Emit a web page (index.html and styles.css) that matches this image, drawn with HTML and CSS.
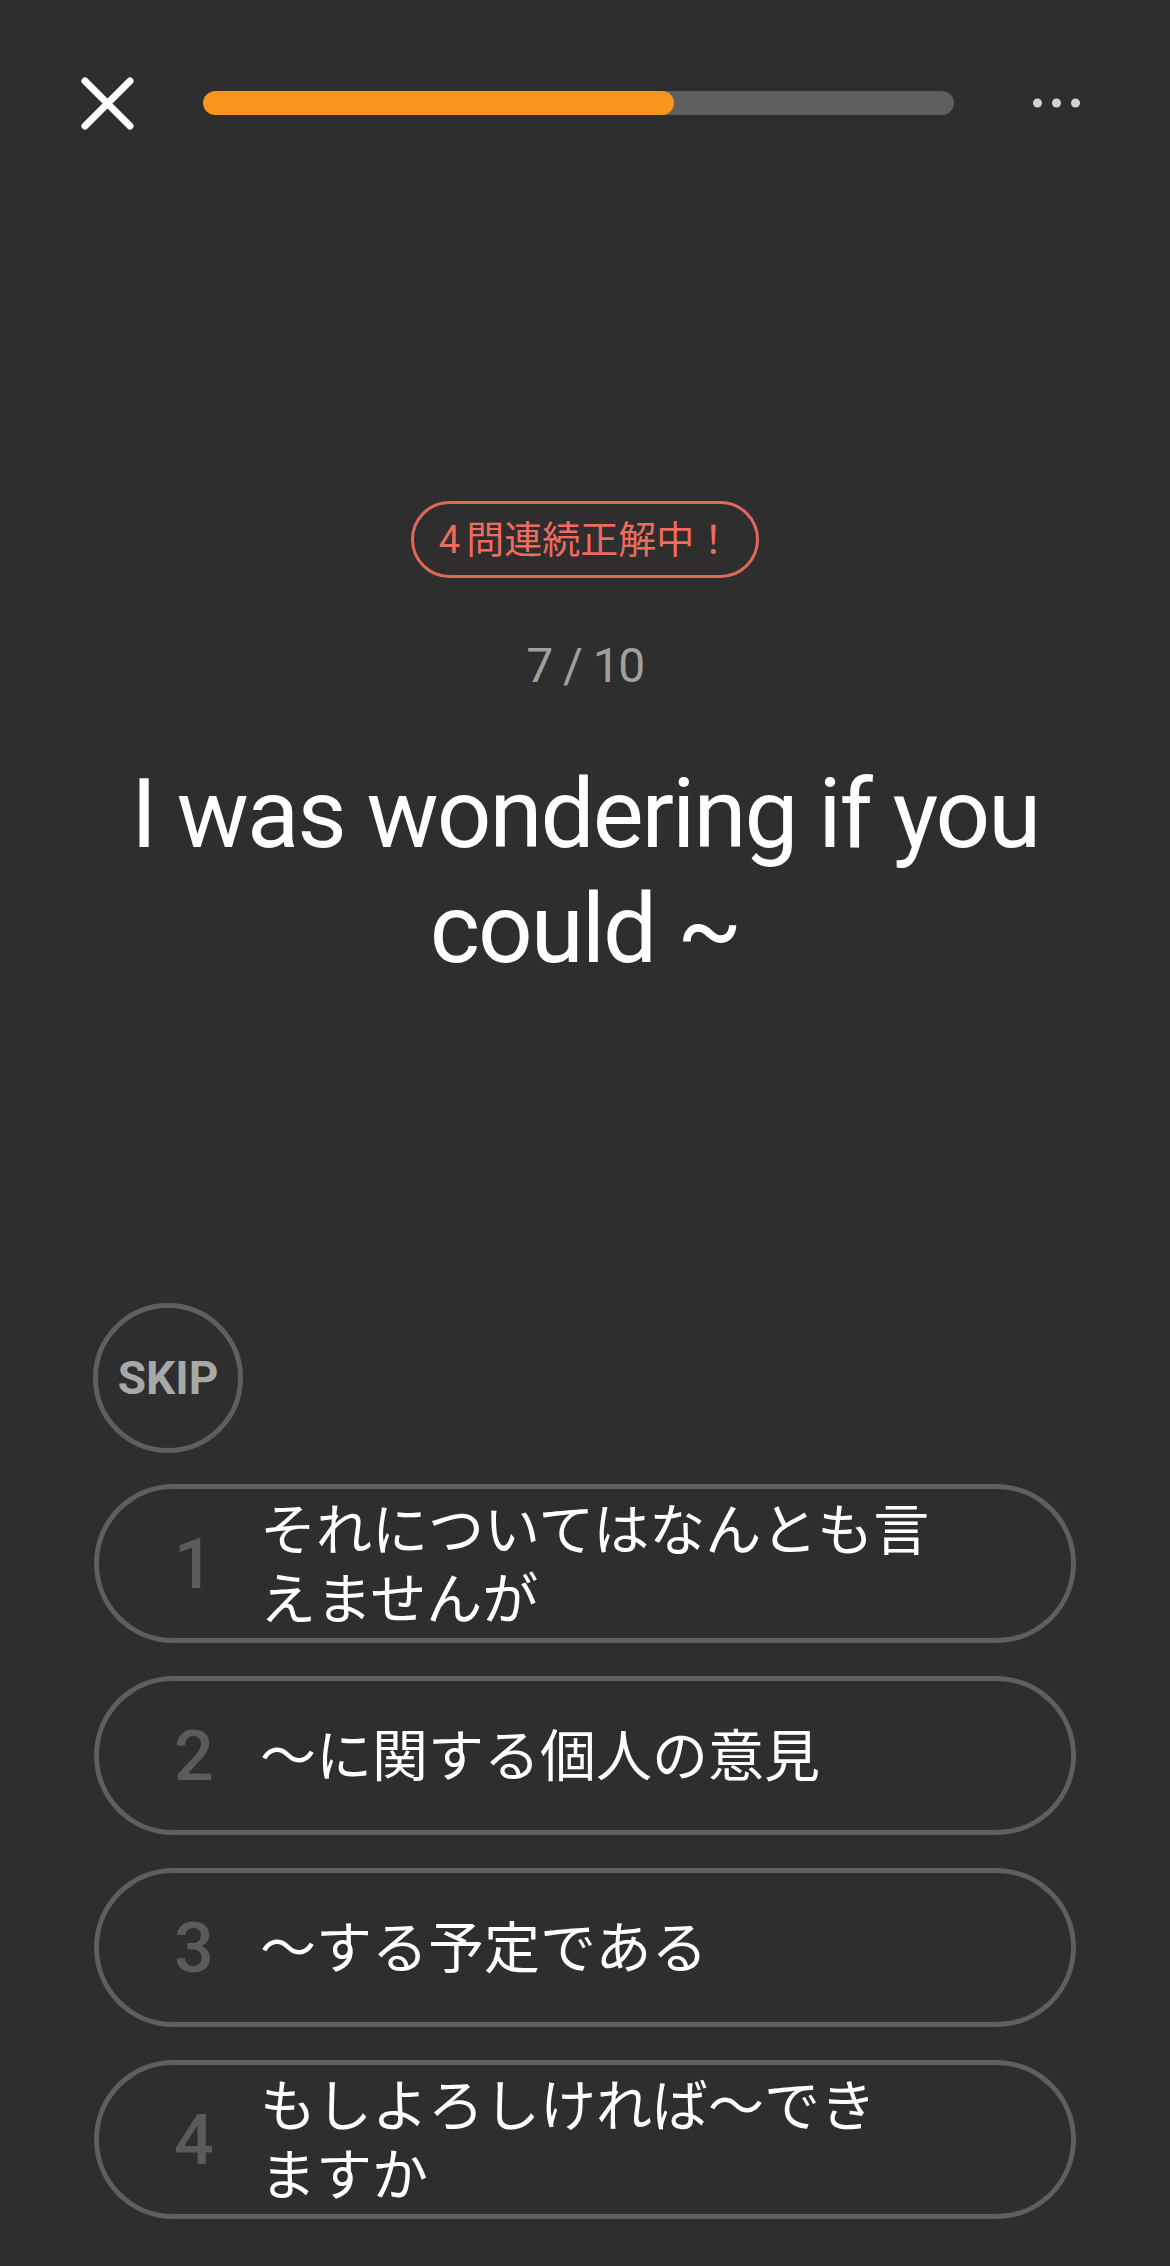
FILE: index.html
```html
<!DOCTYPE html>
<html lang="ja">
<head>
<meta charset="utf-8">
<title>Quiz</title>
<link rel="stylesheet" href="styles.css">
</head>
<body>
<div class="screen">
  <header class="topbar">
    <button class="close" aria-label="close">
      <svg width="53" height="53" viewBox="0 0 53 53"><path d="M4 4 L49 49 M49 4 L4 49" stroke="#ffffff" stroke-width="7" stroke-linecap="round" fill="none"/></svg>
    </button>
    <div class="progress"><div class="progress-fill" style="width: 62.7%"></div></div>
    <button class="more" aria-label="more">
      <svg width="47" height="10" viewBox="0 0 47 10"><circle cx="4.5" cy="5" r="4.5" fill="#d2d2d2"/><circle cx="23.5" cy="5" r="4.5" fill="#d2d2d2"/><circle cx="42.5" cy="5" r="4.5" fill="#d2d2d2"/></svg>
    </button>
  </header>

  <section class="question">
    <div class="streak"><span class="streak-num">4</span>問連続正解中！</div>
    <div class="count">7 / 10</div>
    <h1 class="prompt">I was wondering if you could ~</h1>
  </section>

  <section class="answers">
    <button class="skip">SKIP</button>
    <div class="options">
      <div class="option"><span class="num">1</span><span class="label">それについてはなんとも言<br>えませんが</span></div>
      <div class="option"><span class="num">2</span><span class="label">〜に関する個人の意見</span></div>
      <div class="option"><span class="num">3</span><span class="label">〜する予定である</span></div>
      <div class="option"><span class="num">4</span><span class="label">もしよろしければ〜でき<br>ますか</span></div>
    </div>
  </section>
</div>
</body>
</html>
```

FILE: styles.css
```css
* { box-sizing: border-box; }
html, body {
  margin: 0;
  padding: 0;
  background: #2e2e2e;
}
body {
  font-family: "Roboto", "Noto Sans CJK JP", sans-serif;
  color: #ffffff;
}
.screen {
  width: 1170px;
  height: 2266px;
  overflow: hidden;
}
button {
  font-family: inherit;
  background: none;
  border: none;
  padding: 0;
  margin: 0;
  color: inherit;
}
.topbar {
  height: 206px;
  display: flex;
  align-items: center;
  padding-left: 81px;
}
.close {
  width: 53px;
  height: 53px;
  display: flex;
}
.progress {
  margin-left: 69px;
  width: 751px;
  height: 24px;
  border-radius: 12px;
  background: #5f5f5f;
  overflow: hidden;
}
.progress-fill {
  height: 100%;
  border-radius: 12px;
  background: #f8951d;
}
.more {
  margin-left: 79px;
  width: 47px;
  height: 10px;
  display: flex;
}
.question {
  display: flex;
  flex-direction: column;
  align-items: center;
}
.streak {
  margin-top: 295px;
  height: 77px;
  padding: 0 24px 0 25px;
  display: flex;
  align-items: center;
  border: 3px solid #e2665a;
  border-radius: 40px;
  color: #ef6b5e;
  font-size: 38px;
  line-height: 1;
}
.streak-num {
  margin-right: 6px;
}
.count {
  margin-top: 59px;
  font-size: 48px;
  line-height: 58px;
  color: #a0a0a0;
  letter-spacing: -1.5px;
  word-spacing: 1px;
}
.prompt {
  margin: 62px 0 0;
  width: 982px;
  text-align: center;
  font-size: 96px;
  line-height: 115px;
  font-weight: 400;
  letter-spacing: -2px;
}
.answers {
  padding: 0 94px;
}
.skip {
  display: flex;
  align-items: center;
  justify-content: center;
  margin-top: 316px;
  margin-left: -1px;
  width: 150px;
  height: 150px;
  border: 5px solid #5f5f5f;
  border-radius: 50%;
  color: #a8a8a8;
  font-size: 46px;
  font-weight: 700;
}
.options {
  margin-top: 31px;
  display: flex;
  flex-direction: column;
  gap: 33px;
}
.option {
  height: 159px;
  border: 5px solid #5f5f5f;
  border-radius: 80px;
  display: flex;
  align-items: center;
  padding-left: 55px;
}
.num {
  width: 80px;
  text-align: center;
  font-size: 70px;
  font-weight: 500;
  color: #5b5b5b;
  line-height: 1;
}
.label {
  margin-left: 26px;
  padding-bottom: 8px;
  font-family: "Noto Sans CJK JP", sans-serif;
  font-size: 56px;
  line-height: 69px;
  color: #ffffff;
}
```
